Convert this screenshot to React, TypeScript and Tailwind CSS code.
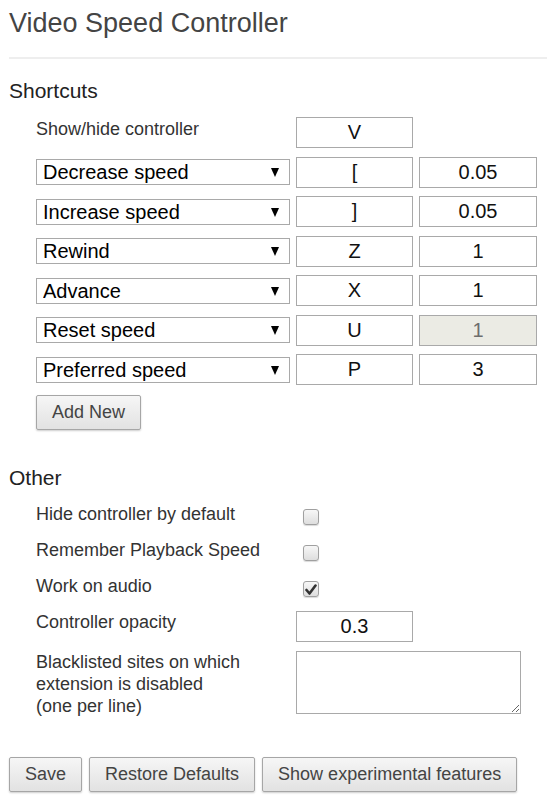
import React from 'react';

const shortcuts = [
    { action: 'Decrease speed', key: '[', value: '0.05' },
    { action: 'Increase speed', key: ']', value: '0.05' },
    { action: 'Rewind', key: 'Z', value: '1' },
    { action: 'Advance', key: 'X', value: '1' },
    { action: 'Reset speed', key: 'U', value: '1', disabled: true },
    { action: 'Preferred speed', key: 'P', value: '3' },
];

const actions = ['Decrease speed', 'Increase speed', 'Rewind', 'Advance', 'Reset speed', 'Preferred speed'];

const inputCls = 'h-[31px] border border-[#a9a9a9] text-center text-[20px] outline-none';
const buttonCls =
    'h-[35px] px-[15px] whitespace-nowrap border border-[#a6a6a6] rounded-[2px] bg-gradient-to-b from-[#f6f6f6] to-[#e2e2e2] text-[18px] text-[#444] shadow-[0_1px_2px_rgba(0,0,0,0.2)]';

const Checkbox: React.FC<{ checked?: boolean }> = ({ checked }) => (
    <span className="mt-[5px] ml-[7px] w-[16px] h-[16px] rounded-[3px] border border-[#a0a0a0] bg-gradient-to-b from-[#f7f7f7] to-[#dedede] shadow-[0_1px_1px_rgba(0,0,0,0.15)] flex items-center justify-center">
        {checked && (
            <svg width="12" height="11" viewBox="0 0 12 11">
                <path d="M1.5 6 L4.5 9.5 L10.5 1.5" fill="none" stroke="#333" strokeWidth="2.6" strokeLinecap="round" strokeLinejoin="round" />
            </svg>
        )}
    </span>
);

export default function App() {
    return (
        <div className="w-[547px] min-h-[802px] bg-white px-[9px] font-['Liberation_Sans',Arial,sans-serif]">
            <h1 className="pt-[8px] text-[27px] leading-[31px] text-[#444]">Video Speed Controller</h1>
            <hr className="mt-[18px] -mr-[9px] border-0 border-t-2 border-[#eeeeee]" />

            <h2 className="mt-[20px] text-[21px] leading-[24px] text-[#222]">Shortcuts</h2>
            <div className="mt-[14px] ml-[27px] flex flex-col gap-[8.5px]">
                {/* Show/hide row */}
                <div className="flex h-[31px]">
                    <div className="w-[260px] pt-[2px] text-[18px] leading-[21px] text-[#333]">Show/hide controller</div>
                    <input className={`${inputCls} w-[117px] bg-white text-[#111]`} defaultValue="V" readOnly />
                </div>

                {shortcuts.map((s) => (
                    <div key={s.action} className="flex items-center gap-[6px] h-[31px]">
                        <div className="relative w-[254px] h-[26px]">
                            <select
                                defaultValue={s.action}
                                className="appearance-none w-full h-full border border-[#a9a9a9] bg-white pl-[6px] text-[20px] leading-[24px] text-black outline-none"
                            >
                                {actions.map((a) => (
                                    <option key={a}>{a}</option>
                                ))}
                            </select>
                            <svg className="absolute right-[11px] top-[9px] pointer-events-none" width="8" height="9" viewBox="0 0 8 9">
                                <path d="M0 0 H8 L4 9 Z" fill="#000" />
                            </svg>
                        </div>
                        <input className={`${inputCls} w-[117px] bg-white text-[#111]`} defaultValue={s.key} readOnly />
                        <input
                            className={`${inputCls} w-[118px] ${s.disabled ? 'bg-[#ebebe4] text-[#6d6d6d]' : 'bg-white text-[#111]'}`}
                            defaultValue={s.value}
                            disabled={s.disabled}
                            readOnly
                        />
                    </div>
                ))}

                <div className="mt-[1.5px]">
                    <button className={buttonCls}>Add New</button>
                </div>
            </div>

            <h2 className="mt-[36px] text-[21px] leading-[24px] text-[#222]">Other</h2>
            <div className="mt-[14px] ml-[27px] flex flex-col text-[18px] leading-[21px] text-[#333]">
                <div className="flex">
                    <div className="w-[260px]">Hide controller by default</div>
                    <Checkbox />
                </div>
                <div className="flex mt-[15px]">
                    <div className="w-[260px]">Remember Playback Speed</div>
                    <Checkbox />
                </div>
                <div className="flex mt-[15px]">
                    <div className="w-[260px]">Work on audio</div>
                    <Checkbox checked />
                </div>
                <div className="flex mt-[14px]">
                    <div className="w-[260px] pt-[1px]">Controller opacity</div>
                    <input className={`${inputCls} w-[117px] bg-white text-[#111]`} defaultValue="0.3" readOnly />
                </div>
                <div className="flex mt-[9px]">
                    <div className="w-[260px] leading-[22px]">
                        Blacklisted sites on which
                        <br />
                        extension is disabled
                        <br />
                        (one per line)
                    </div>
                    <textarea className="w-[225px] h-[63px] border border-[#a9a9a9] bg-white outline-none resize" />
                </div>
            </div>

            <div className="mt-[40px] flex gap-[7px]">
                <button className={buttonCls}>Save</button>
                <button className={buttonCls}>Restore Defaults</button>
                <button className={buttonCls}>Show experimental features</button>
            </div>
        </div>
    );
}
